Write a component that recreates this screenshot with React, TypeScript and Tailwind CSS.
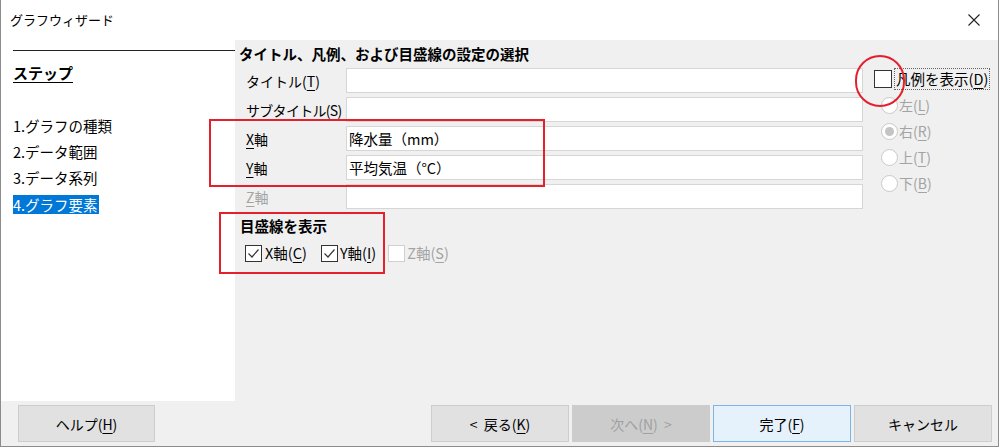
import React from "react";

const U = ({ c }: { c: string }) => <span className="underline underline-offset-[3px] decoration-1">{c}</span>;

function Check({ checked, disabled, big }: { checked?: boolean; disabled?: boolean; big?: boolean }) {
  return (
    <span
      className={`shrink-0 flex items-center justify-center bg-white ${big ? "w-[18px] h-[18px] border-[1.5px] border-[#333333]" : "w-[17px] h-[17px] border"} ${
        !big ? (disabled ? "border-[#d0d0d0]" : "border-[#333333]") : ""
      }`}
    >
      {checked && (
        <svg width="13" height="13" viewBox="0 0 13 13">
          <path d="M1.5 6.5 L5 10 L11.5 2.5" stroke="#333333" strokeWidth="1.2" fill="none" />
        </svg>
      )}
    </span>
  );
}

function Radio({ selected, label, m }: { selected?: boolean; label: string; m: string }) {
  return (
    <div className="h-[26px] flex items-center pl-[7px]">
      <span className="w-[17px] h-[17px] rounded-full border border-[#c9c9c9] bg-white flex items-center justify-center shrink-0">
        {selected && <span className="w-[9px] h-[9px] rounded-full bg-[#c4c4c4]" />}
      </span>
      <span className="ml-[1px] text-[14px] leading-[18px] text-[#a3a3a3] whitespace-nowrap">
        {label}(<U c={m} />)
      </span>
    </div>
  );
}

function Row({ label, value, disabled, tight }: { label: React.ReactNode; value?: string; disabled?: boolean; tight?: boolean }) {
  return (
    <div className="flex items-center h-[25px]">
      <div
        className={`w-[100px] shrink-0 whitespace-nowrap text-[14px] leading-[18px] ${tight ? "tracking-[-0.7px]" : ""} ${
          disabled ? "text-[#a3a3a3]" : "text-black"
        }`}
      >
        {label}
      </div>
      <div className="w-[517px] shrink-0 h-[25px] bg-white border border-[#d6d6d6] flex items-center pl-[2px] text-[14.5px] text-black">
        {value}
      </div>
    </div>
  );
}

function Btn({ children, variant, w }: { children: React.ReactNode; variant?: "default" | "disabled" | "primary"; w: string }) {
  const cls =
    variant === "disabled"
      ? "bg-[#cccccc] border-[#cccccc] text-[#a0a0a0]"
      : variant === "primary"
      ? "bg-[#e5f1fb] border-[#7ab4e8] text-black"
      : "bg-[#e1e1e1] border-[#cdcdcd] text-black";
  return (
    <div className={`${w} h-[37px] border flex items-center justify-center text-[14px] leading-[18px] whitespace-pre ${cls}`}>{children}</div>
  );
}

export default function App() {
  return (
    <div className="w-[1000px] h-[448px] bg-white font-['Noto_Sans_CJK_JP','Noto_Sans',sans-serif] relative overflow-hidden">
      <div className="w-[999px] h-[447px] border-l border-r border-b border-[#8c8c8c] flex flex-col">
        {/* title bar */}
        <div className="h-[40px] bg-white flex items-center justify-between pl-[9px] pr-[18px] shrink-0">
          <span className="text-[13px] leading-[16px] text-black">グラフウィザード</span>
          <svg width="12" height="12" viewBox="0 0 12 12">
            <path d="M0.5 0.5 L11.5 11.5 M11.5 0.5 L0.5 11.5" stroke="#222" strokeWidth="1.1" />
          </svg>
        </div>
        {/* body */}
        <div className="flex h-[361px] shrink-0">
          {/* left pane */}
          <div className="w-[234px] bg-white shrink-0 flex flex-col pl-[12px]">
            <div className="mt-[10px] h-[1px] bg-[#222] w-[226px]" />
            <div className="mt-[13px] text-[15px] leading-[18px] font-bold underline underline-offset-[3px] text-black">ステップ</div>
            <div className="mt-[31px] flex flex-col text-[14.5px] leading-[18px] text-black">
              <div className="h-[26px] flex items-center">1.グラフの種類</div>
              <div className="h-[26px] flex items-center">2.データ範囲</div>
              <div className="h-[26px] flex items-center">3.データ系列</div>
              <div className="h-[27px] flex items-center">
                <span className="bg-[#0078d7] text-white h-[19px] flex items-center pr-[1px]">4.グラフ要素</span>
              </div>
            </div>
          </div>
          {/* right pane */}
          <div className="flex-1 bg-[#f0f0f0] flex flex-col pl-[4px] pt-[5px]">
            <div className="text-[14.5px] leading-[18px] font-bold text-black">タイトル、凡例、および目盛線の設定の選択</div>
            <div className="flex mt-[5px]">
              <div className="flex flex-col">
                <div className="flex flex-col gap-[4px] pl-[7px]">
                  <Row label={<>タイトル(<U c="T" />)</>} />
                  <Row label={<>サブタイトル(<U c="S" />)</>} tight />
                  <Row label={<><U c="X" />軸</>} value="降水量（mm）" />
                  <Row label={<><U c="Y" />軸</>} value="平均気温（°C）" />
                  <Row label={<><U c="Z" />軸</>} disabled />
                </div>
                <div className="mt-[8px] pl-[1px] text-[14.5px] leading-[18px] font-bold text-black">目盛線を表示</div>
                <div className="mt-[9px] pl-[6px] flex items-center text-[14.5px] leading-[18px]">
                  <Check checked />
                  <span className="ml-[3px] mr-[14px]">X軸(<U c="C" />)</span>
                  <Check checked />
                  <span className="ml-[2px] mr-[12px]">Y軸(<U c="I" />)</span>
                  <Check disabled />
                  <span className="ml-[2px] text-[#a3a3a3]">Z軸(<U c="S" />)</span>
                </div>
              </div>
              <div className="flex flex-col ml-[11px]">
                <div className="h-[22px] flex items-center">
                  <Check big />
                  <span className="ml-[2px] h-[22px] px-[1px] border border-dotted border-[#666] flex items-center text-[14.5px] leading-[18px] text-black whitespace-nowrap">
                    凡例を表示(<U c="D" />)
                  </span>
                </div>
                <div className="mt-[2px] flex flex-col">
                  <Radio label="左" m="L" />
                  <Radio label="右" m="R" selected />
                  <Radio label="上" m="T" />
                  <Radio label="下" m="B" />
                </div>
              </div>
            </div>
          </div>
        </div>
        {/* bottom bar */}
        <div className="flex-1 bg-[#f0f0f0] flex items-start pt-[4px] pl-[17px] pr-[6px]">
          <Btn w="w-[137px]">
            ヘルプ(<U c="H" />)
          </Btn>
          <div className="ml-auto flex gap-[3px]">
            <Btn w="w-[138px]">
              {"<  "}戻る(<U c="K" />)
            </Btn>
            <Btn w="w-[138px]" variant="disabled">
              次へ(<U c="N" />){"  >"}
            </Btn>
            <Btn w="w-[138px]" variant="primary">
              完了(<U c="F" />)
            </Btn>
            <Btn w="w-[138px]">キャンセル</Btn>
          </div>
        </div>
      </div>
      {/* annotations */}
      <div className="absolute left-[209px] top-[119px] w-[336px] h-[68px] border-2 border-[#e3202c] pointer-events-none" />
      <div className="absolute left-[219px] top-[212px] w-[166px] h-[62px] border-2 border-[#e3202c] pointer-events-none" />
      <div className="absolute left-[855px] top-[55px] w-[50px] h-[52px] rounded-full border-2 border-[#e3202c] pointer-events-none" />
    </div>
  );
}
